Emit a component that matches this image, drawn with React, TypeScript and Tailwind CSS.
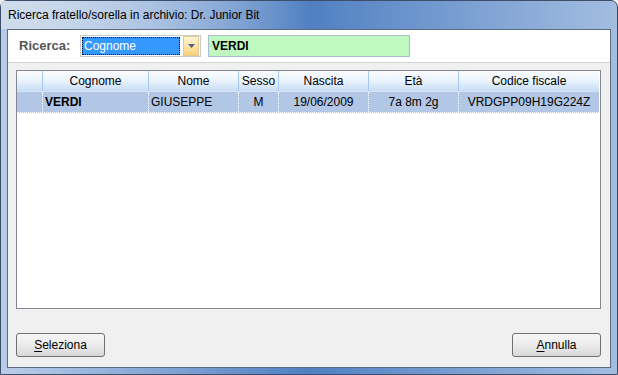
import React from 'react';

const cols = [
  { key: 'sel', label: '', w: 'w-[26px]' },
  { key: 'cognome', label: 'Cognome', w: 'w-[106px]' },
  { key: 'nome', label: 'Nome', w: 'w-[90px]' },
  { key: 'sesso', label: 'Sesso', w: 'w-[40px]' },
  { key: 'nascita', label: 'Nascita', w: 'w-[90px]' },
  { key: 'eta', label: 'Età', w: 'w-[90px]' },
  { key: 'cf', label: 'Codice fiscale', w: 'w-[140px]' },
];

const row = {
  cognome: 'VERDI',
  nome: 'GIUSEPPE',
  sesso: 'M',
  nascita: '19/06/2009',
  eta: '7a 8m 2g',
  cf: 'VRDGPP09H19G224Z',
};

function WinButton({ label }: { label: string }) {
  return (
    <button className="w-[89px] h-[24px] rounded-[3px] border border-[#707070] bg-gradient-to-b from-[#f6f6f6] via-[#ebebeb] to-[#d9d9d9] text-[12px] text-black flex items-center justify-center">
      <span>
        <span className="underline underline-offset-2">{label[0]}</span>
        {label.slice(1)}
      </span>
    </button>
  );
}

export default function App() {
  return (
    <div className="w-[618px] h-[375px] font-['Liberation_Sans',Arial,sans-serif] bg-[#f0f0f0]">
      <div className="w-[618px] h-[375px] rounded-t-[7px] border border-[#3c4e6a] bg-gradient-to-r from-[#b9cde8] via-[#5080c2] to-[#a3bde0] flex flex-col">
        <div className="h-[28px] flex items-center pl-[7px] text-[12px] text-black bg-gradient-to-r from-[#cfdcec] via-[#cfdcec]/0 to-transparent">
          Ricerca fratello/sorella in archivio: Dr. Junior Bit
        </div>
        <div className="mx-[6px] mb-[6px] flex-1 border border-[#5a6b82] bg-[#f0f0f0] flex flex-col">
          <div className="h-[33px] bg-white border-b border-[#d5d5d5] flex items-center pl-[11px]">
            <span className="w-[61px] text-[13px] font-bold text-[#555]">Ricerca:</span>
            <div className="w-[121px] h-[22px] border border-[#c9c9c9] bg-white flex items-center p-[1px]">
              <div className="flex-1 h-[18px] bg-[#3399ff] border border-dotted border-black text-white text-[12px] leading-[16px] pl-[1px]">
                Cognome
              </div>
              <div className="w-[16px] h-[20px] ml-[3px] border border-[#e3c98a] bg-gradient-to-b from-[#fff6d8] to-[#fcd27a] flex items-center justify-center">
                <svg width="7" height="4" viewBox="0 0 7 4">
                  <path d="M0 0h7L3.5 4z" fill="#4d6185" />
                </svg>
              </div>
            </div>
            <div className="ml-[7px] w-[202px] h-[22px] border border-[#a9bcd6] bg-[#c0f9c0] flex items-center pl-[3px] text-[12px] font-bold text-black">
              VERDI
            </div>
          </div>
          <div className="mt-[7px] ml-[8px] mr-[9px] h-[239px] border border-[#828790] bg-white">
            <div className="flex w-fit h-[21px] bg-gradient-to-b from-[#fbfdff] via-[#eaf3fd] to-[#c6dcf5] border-b border-[#d5e3f3]">
              {cols.map((c, i) => (
                <div
                  key={c.key}
                  className={`${c.w} h-full flex items-center justify-center text-[12px] text-black ${i < cols.length - 1 ? 'border-r border-[#a8c8f0]' : ''}`}
                >
                  {c.label}
                </div>
              ))}
            </div>
            <div className="flex w-fit h-[21px] bg-[#b2c6e5] text-[12px] text-black border-b border-dotted border-white">
              <div className="w-[26px] border-r border-dotted border-white" />
              <div className="w-[106px] pl-[2px] font-bold flex items-center border-r border-dotted border-white">
                {row.cognome}
              </div>
              <div className="w-[90px] pl-[2px] flex items-center border-r border-dotted border-white">{row.nome}</div>
              <div className="w-[40px] flex items-center justify-center border-r border-dotted border-white">{row.sesso}</div>
              <div className="w-[90px] flex items-center justify-center border-r border-dotted border-white">{row.nascita}</div>
              <div className="w-[90px] flex items-center justify-center border-r border-dotted border-white">{row.eta}</div>
              <div className="w-[140px] flex items-center justify-center">{row.cf}</div>
            </div>
          </div>
          <div className="mt-auto mb-[10px] pl-[8px] pr-[9px] flex justify-between">
            <WinButton label="Seleziona" />
            <WinButton label="Annulla" />
          </div>
        </div>
      </div>
    </div>
  );
}
